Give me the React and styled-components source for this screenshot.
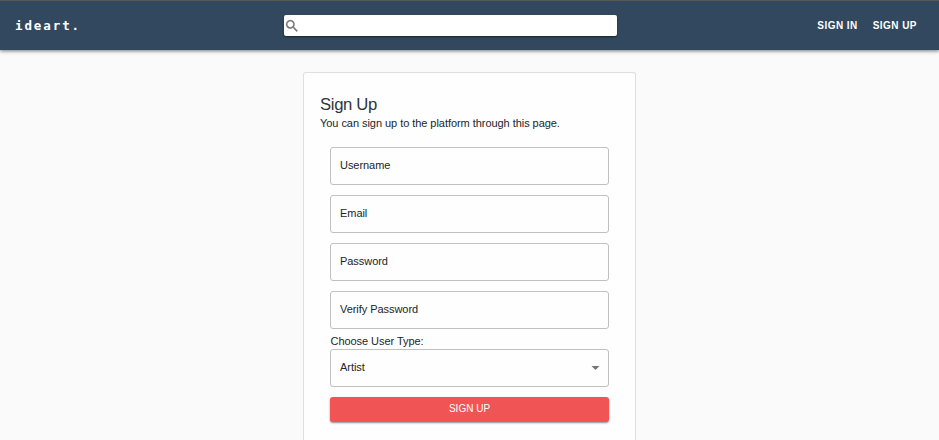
import React from "react";
import styled, { createGlobalStyle } from "styled-components";

const GlobalStyle = createGlobalStyle`
  * { box-sizing: border-box; }
  body {
    margin: 0;
    background: #fafafa;
    color: #212529;
    font-family: "Liberation Sans", Arial, sans-serif;
  }
`;

const Page = styled.div`
  display: flex;
  flex-direction: column;
  height: 440px;
`;

const Header = styled.header`
  display: grid;
  grid-template-columns: 284px 333px 1fr;
  align-items: center;
  height: 50px;
  background: #31485e;
  border-top: 1px solid #585858;
  box-shadow: 0 1px 3px rgba(0, 0, 0, 0.35), 0 2px 4px rgba(0, 0, 0, 0.16);
`;

const Logo = styled.a`
  padding-left: 15px;
  color: #fff;
  font: bold 12.5px/16px "DejaVu Sans Mono", monospace;
  letter-spacing: 1.9px;
`;

const SearchBar = styled.label`
  display: flex;
  align-items: center;
  height: 21px;
  border-radius: 2px;
  background: #fff;
  box-shadow: 0 1px 2px rgba(0, 0, 0, 0.5);
`;

const SearchIcon = styled.svg`
  width: 16px;
  height: 16px;
  fill: #757575;
  stroke: #757575;
  stroke-width: 0.4;
`;

const Nav = styled.nav`
  display: flex;
  justify-content: flex-end;
  gap: 15px;
  padding-right: 22px;
`;

const NavLink = styled.a`
  color: #fff;
  font-size: 10px;
  font-weight: bold;
  line-height: 16px;
  letter-spacing: 0.45px;
`;

const Card = styled.main`
  flex: 1;
  width: 333px;
  margin: 22px 0 0 303px;
  padding: 22px 16px 0;
  background: #fefefe;
  border: 1px solid #dfdfdf;
  border-bottom: 0;
  border-radius: 3px 3px 0 0;
`;

const Title = styled.h1`
  margin: 0;
  color: #30353a;
  font-size: 16.7px;
  font-weight: 400;
  line-height: 20px;
  letter-spacing: -0.35px;
`;

const Subtitle = styled.p`
  margin: 0;
  font-size: 11px;
  line-height: 16px;
  letter-spacing: -0.05px;
`;

const Form = styled.form`
  display: flex;
  flex-direction: column;
  margin: 16px 10px 0;
`;

const Field = styled.div`
  display: flex;
  align-items: center;
  justify-content: space-between;
  height: 38px;
  margin-bottom: ${(p) => (p.$last ? 1 : 10)}px;
  padding: 0 6px 2px 9px;
  border: 1px solid #c0c0c0;
  border-radius: 3px;
  font-size: 11px;
  letter-spacing: -0.05px;
`;

const Caption = styled.label`
  height: 19px;
  padding: 3px 0 0 0.5px;
  font-size: 11px;
  line-height: 16px;
  letter-spacing: -0.05px;
`;

const Arrow = styled.svg`
  width: 13px;
  height: 16px;
  fill: #757575;
`;

const Submit = styled.button`
  height: 25px;
  padding: 0 0 2px;
  border: 0;
  border-radius: 3px;
  background: #f05455;
  color: #fff;
  font: 400 10px/16px "Liberation Sans", Arial, sans-serif;
  letter-spacing: 0;
  box-shadow: 0 1px 2px rgba(0, 0, 0, 0.45);
`;

const fields = ["Username", "Email", "Password", "Verify Password"];

export default function App() {
  return (
    <Page>
      <GlobalStyle />
      <Header>
        <Logo>ideart.</Logo>
        <SearchBar>
          <SearchIcon viewBox="0 0 24 24">
            <path d="M15.5 14h-.79l-.28-.27A6.47 6.47 0 0 0 16 9.5 6.5 6.5 0 1 0 9.5 16c1.61 0 3.09-.59 4.23-1.57l.27.28v.79l5 4.99L20.49 19l-4.99-5zm-6 0C7.01 14 5 11.99 5 9.5S7.01 5 9.5 5 14 7.01 14 9.5 11.99 14 9.5 14z" />
          </SearchIcon>
        </SearchBar>
        <Nav>
          <NavLink>SIGN IN</NavLink>
          <NavLink>SIGN UP</NavLink>
        </Nav>
      </Header>
      <Card>
        <Title>Sign Up</Title>
        <Subtitle>You can sign up to the platform through this page.</Subtitle>
        <Form>
          {fields.map((name, i) => (
            <Field key={name} $last={i === fields.length - 1}>{name}</Field>
          ))}
          <Caption>Choose User Type:</Caption>
          <Field>
            Artist
            <Arrow viewBox="0 0 13 16">
              <path d="M2.5 7h8l-4 4z" />
            </Arrow>
          </Field>
          <Submit type="button">SIGN UP</Submit>
        </Form>
      </Card>
    </Page>
  );
}
